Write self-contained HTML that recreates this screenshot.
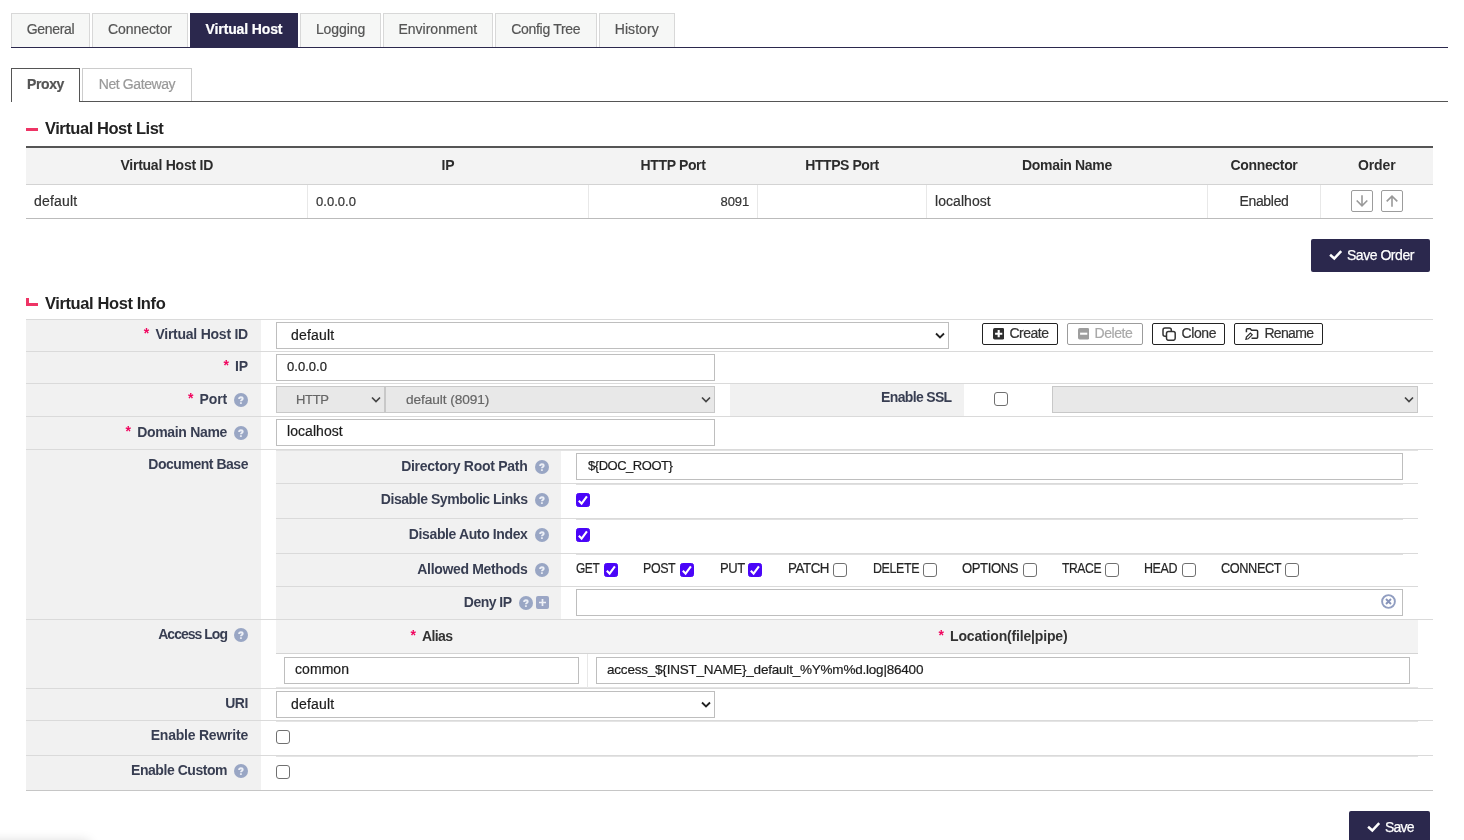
<!DOCTYPE html>
<html><head>
<meta charset="utf-8">
<title>Virtual Host</title>
<style>
*{box-sizing:border-box;margin:0;padding:0}
html,body{width:1464px;height:840px;overflow:hidden;background:#fff}
body{font-family:"Liberation Sans",sans-serif;font-size:14px;color:#333;letter-spacing:-0.3px}
#page{position:relative;width:1464px;height:840px;overflow:hidden;background:transparent;will-change:transform}
.abs{position:absolute}
/* main tabs */
.tab{position:absolute;top:13px;height:34px;line-height:30px;text-align:center;background:#f6f7f6;border:1px solid #d8d8d8;border-bottom:none;color:#555;font-size:14px;white-space:nowrap}
.tab.on{background:#2b284d;border-color:#2b284d;color:#fff;font-weight:bold;letter-spacing:-0.2px}
.line1{position:absolute;left:11px;top:47px;width:1437px;height:1px;background:#2b284d}
/* sub tabs */
.stab{position:absolute;top:68px;height:33px;line-height:31px;text-align:center;background:#fff;border:1px solid #ccc;border-bottom:none;color:#999;white-space:nowrap}
.stab.on{height:34px;border-color:#555;color:#555;font-weight:bold;letter-spacing:-0.5px}
.line2{position:absolute;left:80px;top:101px;width:1368px;height:1px;background:#555}
/* titles */
.ttl{position:absolute;left:45px;font-size:16.5px;font-weight:bold;color:#222;letter-spacing:-0.45px;white-space:nowrap;line-height:20px}
/* list table */
.th{position:absolute;top:148px;height:36px;line-height:35px;text-align:center;font-weight:bold;color:#2c2c2c;letter-spacing:-0.35px;white-space:nowrap}
.td{position:absolute;top:185px;height:33px;line-height:33.300px;font-size:13.500px;color:#333;white-space:nowrap}
.vd{position:absolute;top:185px;width:1px;height:33px;background:#e8e8e8}
.obtn{position:absolute;top:190px;width:22px;height:22px;border:1px solid #9c9c9c;border-radius:2px;background:#fff}
/* buttons */
.pbtn{position:absolute;background:#2b284d;color:#fff;-webkit-text-stroke:0.25px #fff;border-radius:2px;white-space:nowrap}
.sbtn{position:absolute;top:323px;height:22px;border:1px solid #222;border-radius:2px;background:#fff;color:#333;white-space:nowrap;line-height:19px;font-size:14px}
.sbtn.dis{border-color:#9c9c9c;color:#a8a8a8}
/* form */
.lab{position:absolute;left:26px;width:235px;background:#f1f1f1}
.hl{position:absolute;height:1px;background:#dadada}
.lt{margin-top:-1px;position:absolute;text-align:right;font-weight:bold;color:#383e52;letter-spacing:-0.4px;white-space:nowrap;line-height:18px}
.req{color:#f0065f;font-weight:bold;margin-right:6.5px;position:relative;top:-0.5px}
.inp{position:absolute;height:27px;border:1px solid #bebebe;background:#fff;line-height:25.300px;font-size:13.500px;color:#1c1c1c;white-space:nowrap;overflow:hidden}
.inp.ti{line-height:23.300px}
.inp,.td,.mt,.tab,.sbtn,.stab{-webkit-text-stroke:0.2px}
.inp.dis{background:#e8e8e8;border-color:#c8c8c8;color:#666}
.help{position:absolute;width:14px;height:14px;border-radius:7px;background:#99a6c4}
.cb{position:absolute;width:14px;height:14px;border:1.2px solid #707070;border-radius:3px;background:#fff}
.cb.on{background:#4a05f8;border-color:#4a05f8;border-radius:2.5px}
.mt{margin-left:-0.7px;position:absolute;top:559px;line-height:18px;color:#262626;white-space:nowrap;letter-spacing:-0.35px}
</style>
</head>
<body>
<div id="page">

<!-- main tabs -->
<div class="tab" style="left:11px;width:79px"><span style="letter-spacing: -0.34px;">General</span></div>
<div class="tab" style="left:92px;width:96px"><span style="letter-spacing: -0.08px;">Connector</span></div>
<div class="tab on" style="left:190px;width:108px"><span style="letter-spacing: -0.13px;">Virtual Host</span></div>
<div class="tab" style="left:300px;width:81px"><span style="letter-spacing: -0.09px;">Logging</span></div>
<div class="tab" style="left:383px;width:109.5px"><span style="letter-spacing: 0.01px;">Environment</span></div>
<div class="tab" style="left:495px;width:101.5px"><span style="letter-spacing: -0.31px;">Config Tree</span></div>
<div class="tab" style="left:599px;width:75.5px"><span style="letter-spacing: 0.08px;">History</span></div>
<div class="line1"></div>

<!-- sub tabs -->
<div class="line2"></div>
<div class="stab on" style="left:11px;width:69px"><span style="letter-spacing: -0.4px;">Proxy</span></div>
<div class="stab" style="left:82px;width:110px"><span style="letter-spacing: -0.41px;">Net Gateway</span></div>

<!-- Virtual Host List -->
<div class="abs" style="left:26px;top:128px;width:12px;height:3px;background:#ee3465"></div>
<div class="ttl" style="top:118px"><span style="letter-spacing: -0.46px;">Virtual Host List</span></div>

<div class="abs" style="left:26px;top:146px;width:1407px;height:2px;background:#555"></div>
<div class="abs" style="left:26px;top:148px;width:1407px;height:36px;background:#f3f3f3"></div>
<div class="abs" style="left:26px;top:184px;width:1407px;height:1px;background:#d3d3d3"></div>
<div class="abs" style="left:26px;top:218px;width:1407px;height:1px;background:#bbb"></div>

<div class="th" style="left:26px;width:281.5px"><span style="letter-spacing: -0.24px;">Virtual Host ID</span></div>
<div class="th" style="left:307.5px;width:281px"><span style="letter-spacing: -0.17px;">IP</span></div>
<div class="th" style="left:588.5px;width:169px"><span style="letter-spacing: -0.36px;">HTTP Port</span></div>
<div class="th" style="left:757.5px;width:169px"><span style="letter-spacing: -0.44px;">HTTPS Port</span></div>
<div class="th" style="left:926.5px;width:281px"><span style="letter-spacing: -0.32px;">Domain Name</span></div>
<div class="th" style="left:1207.5px;width:113px"><span style="letter-spacing: -0.34px;">Connector</span></div>
<div class="th" style="left:1320.5px;width:112.5px"><span style="letter-spacing: -0.15px;">Order</span></div>

<div class="vd" style="left:307px"></div>
<div class="vd" style="left:588px"></div>
<div class="vd" style="left:757px"></div>
<div class="vd" style="left:926px"></div>
<div class="vd" style="left:1207px"></div>
<div class="vd" style="left:1320px"></div>

<div class="td" style="left:34px"><span style="letter-spacing: 0.19px; font-size: 14px;">default</span></div>
<div class="td" style="left:316px"><span style="letter-spacing: 0.02px; font-size: 13px;">0.0.0.0</span></div>
<div class="td" style="left:700px;width:49px;text-align:right"><span style="letter-spacing: -0.11px; font-size: 13px;">8091</span></div>
<div class="td" style="left:935px"><span style="letter-spacing: 0.06px; font-size: 14px;">localhost</span></div>
<div class="td" style="left:1207.5px;width:113px;text-align:center"><span style="letter-spacing: -0.32px; font-size: 14px;">Enabled</span></div>
<div class="obtn" style="left:1351px"><svg width="20" height="20" viewBox="0 0 20 20"><path d="M10 4.200V15M4.700 9.500L10 14.800L15.300 9.500" fill="none" stroke="#999" stroke-width="1.600"></path></svg></div>
<div class="obtn" style="left:1381px"><svg width="20" height="20" viewBox="0 0 20 20"><path d="M10 15.700V5M4.700 10.400L10 5.100L15.300 10.400" fill="none" stroke="#999" stroke-width="1.600"></path></svg></div>

<!-- Save Order -->
<div class="pbtn" style="left:1311px;top:239px;width:119px;height:33px;line-height:33px">
  <svg class="abs" style="left:17px;top:10px" width="15" height="13" viewBox="0 0 15 13"><path d="M2.100 5.700L6.300 9.500L13.200 2.100" fill="none" stroke="#fff" stroke-width="2.500"></path></svg>
  <span class="abs" style="left:36px;top:0"><span style="letter-spacing: -0.47px;">Save Order</span></span>
</div>

<!-- Virtual Host Info -->
<div class="abs" style="left:26px;top:298px;width:3px;height:8px;background:#ee3465"></div>
<div class="abs" style="left:26px;top:303px;width:12px;height:3px;background:#ee3465"></div>
<div class="ttl" style="top:293px"><span style="letter-spacing: -0.4px;">Virtual Host Info</span></div>

<!-- FORM_START -->
<!-- label column bg -->
<div class="lab" style="top:320px;height:470px"></div>
<!-- inner label bgs -->
<div class="abs" style="left:730px;top:384px;width:234px;height:32px;background:#f1f1f1"></div>
<div class="abs" style="left:276px;top:451px;width:285px;height:168px;background:#f1f1f1"></div>
<div class="abs" style="left:276px;top:620px;width:1142px;height:33px;background:#f3f3f3"></div>

<!-- inner soft lines (x 276..1418) -->
<div class="hl" style="left:276px;width:1142px;top:450px;background:#e2e2e2"></div>
<div class="hl" style="left:576px;width:826.500px;top:484px;background:#e0e0e0"></div>
<div class="hl" style="left:576px;width:826.500px;top:519px;background:#e0e0e0"></div>
<div class="hl" style="left:576px;width:826.500px;top:554px;background:#e0e0e0"></div>
<div class="hl" style="left:276px;width:1142px;top:687px;background:#e4e4e4"></div>
<div class="hl" style="left:276px;width:1142px;top:721px;background:#e4e4e4"></div>
<div class="hl" style="left:276px;width:1142px;top:756px;background:#e4e4e4"></div>

<!-- outer row lines -->
<div class="hl" style="left:26px;width:1407px;top:319px"></div>
<div class="hl" style="left:26px;width:1407px;top:351px"></div>
<div class="hl" style="left:26px;width:1407px;top:383px"></div>
<div class="hl" style="left:26px;width:1407px;top:416px"></div>
<div class="hl" style="left:26px;width:1407px;top:449px"></div>
<div class="hl" style="left:26px;width:1407px;top:619px"></div>
<div class="hl" style="left:26px;width:1407px;top:688px"></div>
<div class="hl" style="left:26px;width:1407px;top:720px"></div>
<div class="hl" style="left:26px;width:1407px;top:755px"></div>
<div class="hl" style="left:26px;width:1407px;top:790px;background:#c6c6c6"></div>
<!-- nested row lines -->
<div class="hl" style="left:276px;width:1142px;top:483px"></div>
<div class="hl" style="left:276px;width:1142px;top:518px"></div>
<div class="hl" style="left:276px;width:1142px;top:553px"></div>
<div class="hl" style="left:276px;width:1142px;top:586px"></div>
<div class="hl" style="left:276px;width:1142px;top:653px;background:#d4d4d4"></div>
<div class="abs" style="left:587px;top:654px;width:1px;height:34px;background:#e8e8e8"></div>

<!-- outer labels -->
<div class="lt" style="left:26px;width:222px;top:325.500px"><span class="req">*</span><span style="letter-spacing: -0.24px;">Virtual Host ID</span></div>
<div class="lt" style="left:26px;width:222px;top:357.500px"><span class="req">*</span><span style="letter-spacing: -0.17px;">IP</span></div>
<div class="lt" style="left:26px;width:201px;top:390.500px"><span class="req">*</span><span style="letter-spacing: -0.15px;">Port</span></div>
<div class="help" style="left:234px;top:393px"><svg width="14" height="14" viewBox="0 0 14 14"><path d="M5.100 5.900c0-1.100 0.700-1.700 1.800-1.700s1.800 0.600 1.800 1.500c0 1.300-1.800 1.200-1.800 2.600" fill="none" stroke="#eceff6" stroke-width="1.900"></path><rect x="5.950" y="9.300" width="1.900" height="1.600" fill="#eceff6"></rect></svg></div>
<div class="lt" style="left:26px;width:201px;top:423.500px"><span class="req">*</span><span style="letter-spacing: -0.32px;">Domain Name</span></div>
<div class="help" style="left:234px;top:426px"><svg width="14" height="14" viewBox="0 0 14 14"><path d="M5.100 5.900c0-1.100 0.700-1.700 1.800-1.700s1.800 0.600 1.800 1.500c0 1.300-1.800 1.200-1.800 2.600" fill="none" stroke="#eceff6" stroke-width="1.900"></path><rect x="5.950" y="9.300" width="1.900" height="1.600" fill="#eceff6"></rect></svg></div>
<div class="lt" style="left:26px;width:222px;top:455.500px"><span style="letter-spacing: -0.47px;">Document Base</span></div>
<div class="lt" style="left:26px;width:201px;top:625.500px"><span style="letter-spacing: -0.98px;">Access Log</span></div>
<div class="help" style="left:234px;top:628px"><svg width="14" height="14" viewBox="0 0 14 14"><path d="M5.100 5.900c0-1.100 0.700-1.700 1.800-1.700s1.800 0.600 1.800 1.500c0 1.300-1.800 1.200-1.800 2.600" fill="none" stroke="#eceff6" stroke-width="1.900"></path><rect x="5.950" y="9.300" width="1.900" height="1.600" fill="#eceff6"></rect></svg></div>
<div class="lt" style="left:26px;width:222px;top:694.500px"><span style="letter-spacing: -0.44px;">URI</span></div>
<div class="lt" style="left:26px;width:222px;top:726.500px"><span style="letter-spacing: -0.22px;">Enable Rewrite</span></div>
<div class="lt" style="left:26px;width:201px;top:761.500px"><span style="letter-spacing: -0.46px;">Enable Custom</span></div>
<div class="help" style="left:234px;top:764px"><svg width="14" height="14" viewBox="0 0 14 14"><path d="M5.100 5.900c0-1.100 0.700-1.700 1.800-1.700s1.800 0.600 1.800 1.500c0 1.300-1.800 1.200-1.800 2.600" fill="none" stroke="#eceff6" stroke-width="1.900"></path><rect x="5.950" y="9.300" width="1.900" height="1.600" fill="#eceff6"></rect></svg></div>

<!-- row 1 -->
<div class="inp" style="left:276px;top:322px;width:672.500px;padding-left:14px"><span style="letter-spacing: 0.19px; font-size: 14px;">default</span></div>
<svg class="abs" style="left:935px;top:332px" width="10" height="8" viewBox="0 0 10 8"><path d="M1 1.500l4 4l4-4" fill="none" stroke="#222" stroke-width="1.800"></path></svg>
<div class="sbtn" style="left:982px;width:76px"><svg class="abs" style="left:10px;top:4.300px" width="11.400" height="11.400" viewBox="0 0 12 12"><rect x="0" y="0" width="12" height="12" rx="1.800" fill="#2e2e2e"></rect><path d="M6 2.200v7.600M2.200 6h7.600" stroke="#fff" stroke-width="2.200"></path></svg><span class="abs" style="left:26.500px;top:0"><span style="letter-spacing: -0.52px;">Create</span></span></div>
<div class="sbtn dis" style="left:1067px;width:76px"><svg class="abs" style="left:10px;top:4.300px" width="11.400" height="11.400" viewBox="0 0 12 12"><rect x="0" y="0" width="12" height="12" rx="1.800" fill="#9e9e9e"></rect><path d="M2.200 6h7.600" stroke="#fff" stroke-width="2.200"></path></svg><span class="abs" style="left:26.500px;top:0"><span style="letter-spacing: -0.46px;">Delete</span></span></div>
<div class="sbtn" style="left:1152px;width:73px"><svg class="abs" style="left:9.300px;top:3px" width="14" height="14" viewBox="0 0 14 14"><rect x="1" y="1" width="8.300" height="8.300" rx="2" fill="none" stroke="#333" stroke-width="1.500"></rect><rect x="4.500" y="4.600" width="8.700" height="8.700" rx="2" fill="#fff" stroke="#333" stroke-width="1.500"></rect></svg><span class="abs" style="left:28.500px;top:0"><span style="letter-spacing: -0.39px;">Clone</span></span></div>
<div class="sbtn" style="left:1234px;width:89px"><svg class="abs" style="left:10.300px;top:4.300px" width="14" height="12" viewBox="0 0 14 12"><path d="M1.400 4.300V1.800c0-0.600 0.400-1 1-1h2.800l1.400 1.500h5c0.600 0 1 0.400 1 1v6c0 0.600-0.400 1-1 1H6.500" fill="none" stroke="#2e2e2e" stroke-width="1.500"></path><path d="M0.900 11.300l0.500-2.300l4-4l1.800 1.800l-4 4z" fill="#fff" stroke="#2e2e2e" stroke-width="1.200"></path></svg><span class="abs" style="left:29.400px;top:0"><span style="letter-spacing: -0.67px;">Rename</span></span></div>

<!-- row 2 -->
<div class="inp ti" style="left:276px;top:354px;width:439px;padding-left:10px"><span style="letter-spacing: 0.02px; font-size: 13px;">0.0.0.0</span></div>

<!-- row 3 -->
<div class="inp dis" style="left:276px;top:386px;width:108.500px;padding-left:19px"><span style="letter-spacing: -0.33px; font-size: 13px;">HTTP</span></div>
<svg class="abs" style="left:371px;top:396px" width="10" height="8" viewBox="0 0 10 8"><path d="M1 1.500l4 4l4-4" fill="none" stroke="#444" stroke-width="1.700"></path></svg>
<div class="inp dis" style="left:385px;top:386px;width:330px;padding-left:20px"><span style="letter-spacing: -0.08px; font-size: 13.7px;">default (8091)</span></div>
<svg class="abs" style="left:701px;top:396px" width="10" height="8" viewBox="0 0 10 8"><path d="M1 1.500l4 4l4-4" fill="none" stroke="#444" stroke-width="1.700"></path></svg>
<div class="lt" style="left:730px;width:221.500px;top:389px"><span style="letter-spacing: -0.66px;">Enable SSL</span></div>
<div class="cb" style="left:994px;top:392px"></div>
<div class="inp dis" style="left:1052px;top:386px;width:366px"></div>
<svg class="abs" style="left:1404px;top:396px" width="10" height="8" viewBox="0 0 10 8"><path d="M1 1.500l4 4l4-4" fill="none" stroke="#444" stroke-width="1.700"></path></svg>

<!-- row 4 -->
<div class="inp ti" style="left:276px;top:419px;width:439px;padding-left:10px"><span style="letter-spacing: 0.06px; font-size: 14px;">localhost</span></div>

<!-- Document base nested -->
<div class="lt" style="left:276px;width:251.500px;top:457.500px"><span style="letter-spacing: -0.27px;">Directory Root Path</span></div>
<div class="help" style="left:535px;top:460px"><svg width="14" height="14" viewBox="0 0 14 14"><path d="M5.100 5.900c0-1.100 0.700-1.700 1.800-1.700s1.800 0.600 1.800 1.500c0 1.300-1.800 1.200-1.800 2.600" fill="none" stroke="#eceff6" stroke-width="1.900"></path><rect x="5.950" y="9.300" width="1.900" height="1.600" fill="#eceff6"></rect></svg></div>
<div class="inp ti" style="left:576px;top:453px;width:826.500px;padding-left:11px"><span style="letter-spacing: -0.47px; font-size: 13px;">${DOC_ROOT}</span></div>

<div class="lt" style="left:276px;width:251.500px;top:490.500px"><span style="letter-spacing: -0.44px;">Disable Symbolic Links</span></div>
<div class="help" style="left:535px;top:493px"><svg width="14" height="14" viewBox="0 0 14 14"><path d="M5.100 5.900c0-1.100 0.700-1.700 1.800-1.700s1.800 0.600 1.800 1.500c0 1.300-1.800 1.200-1.800 2.600" fill="none" stroke="#eceff6" stroke-width="1.900"></path><rect x="5.950" y="9.300" width="1.900" height="1.600" fill="#eceff6"></rect></svg></div>
<div class="cb on" style="left:576px;top:493px"><svg class="abs" style="left:-1px;top:-1px" width="14" height="14" viewBox="0 0 14 14"><path d="M2.800 7.800L5.600 10.600L10.900 3.400" fill="none" stroke="#fff" stroke-width="2.100"></path></svg></div>

<div class="lt" style="left:276px;width:251.500px;top:525.500px"><span style="letter-spacing: -0.38px;">Disable Auto Index</span></div>
<div class="help" style="left:535px;top:528px"><svg width="14" height="14" viewBox="0 0 14 14"><path d="M5.100 5.900c0-1.100 0.700-1.700 1.800-1.700s1.800 0.600 1.800 1.500c0 1.300-1.800 1.200-1.800 2.600" fill="none" stroke="#eceff6" stroke-width="1.900"></path><rect x="5.950" y="9.300" width="1.900" height="1.600" fill="#eceff6"></rect></svg></div>
<div class="cb on" style="left:576px;top:528px"><svg class="abs" style="left:-1px;top:-1px" width="14" height="14" viewBox="0 0 14 14"><path d="M2.800 7.800L5.600 10.600L10.900 3.400" fill="none" stroke="#fff" stroke-width="2.100"></path></svg></div>

<div class="lt" style="left:276px;width:251.500px;top:560.500px"><span style="letter-spacing: -0.33px;">Allowed Methods</span></div>
<div class="help" style="left:535px;top:562.500px"><svg width="14" height="14" viewBox="0 0 14 14"><path d="M5.100 5.900c0-1.100 0.700-1.700 1.800-1.700s1.800 0.600 1.800 1.500c0 1.300-1.800 1.200-1.800 2.600" fill="none" stroke="#eceff6" stroke-width="1.900"></path><rect x="5.950" y="9.300" width="1.900" height="1.600" fill="#eceff6"></rect></svg></div>
<div class="mt" style="left:576.500px"><span style="letter-spacing: -0.45px; display: inline-block; transform-origin: 0px 50%; transform: scaleX(0.849);">GET</span></div><div class="cb on" style="left:604px;top:563px"><svg class="abs" style="left:-1px;top:-1px" width="14" height="14" viewBox="0 0 14 14"><path d="M2.800 7.800L5.600 10.600L10.900 3.400" fill="none" stroke="#fff" stroke-width="2.100"></path></svg></div>
<div class="mt" style="left:644px"><span style="letter-spacing: -0.45px; display: inline-block; transform-origin: 0px 50%; transform: scaleX(0.889);">POST</span></div><div class="cb on" style="left:680px;top:563px"><svg class="abs" style="left:-1px;top:-1px" width="14" height="14" viewBox="0 0 14 14"><path d="M2.800 7.800L5.600 10.600L10.900 3.400" fill="none" stroke="#fff" stroke-width="2.100"></path></svg></div>
<div class="mt" style="left:720.500px"><span style="letter-spacing: -0.45px; display: inline-block; transform-origin: 0px 50%; transform: scaleX(0.931);">PUT</span></div><div class="cb on" style="left:748px;top:563px"><svg class="abs" style="left:-1px;top:-1px" width="14" height="14" viewBox="0 0 14 14"><path d="M2.800 7.800L5.600 10.600L10.900 3.400" fill="none" stroke="#fff" stroke-width="2.100"></path></svg></div>
<div class="mt" style="left:788.500px"><span style="letter-spacing: -0.45px; display: inline-block; transform-origin: 0px 50%; transform: scaleX(0.952);">PATCH</span></div><div class="cb" style="left:833px;top:563px"></div>
<div class="mt" style="left:873.500px"><span style="letter-spacing: -0.45px; display: inline-block; transform-origin: 0px 50%; transform: scaleX(0.89);">DELETE</span></div><div class="cb" style="left:923px;top:563px"></div>
<div class="mt" style="left:963px"><span style="letter-spacing: -0.45px; display: inline-block; transform-origin: 0px 50%; transform: scaleX(0.936);">OPTIONS</span></div><div class="cb" style="left:1022.500px;top:563px"></div>
<div class="mt" style="left:1062.500px"><span style="letter-spacing: -0.45px; display: inline-block; transform-origin: 0px 50%; transform: scaleX(0.865);">TRACE</span></div><div class="cb" style="left:1105px;top:563px"></div>
<div class="mt" style="left:1145px"><span style="letter-spacing: -0.45px; display: inline-block; transform-origin: 0px 50%; transform: scaleX(0.892);">HEAD</span></div><div class="cb" style="left:1182px;top:563px"></div>
<div class="mt" style="left:1222px"><span style="letter-spacing: -0.45px; display: inline-block; transform-origin: 0px 50%; transform: scaleX(0.911);">CONNECT</span></div><div class="cb" style="left:1285px;top:563px"></div>

<div class="lt" style="left:276px;width:235.500px;top:593.500px"><span style="letter-spacing: -0.53px;">Deny IP</span></div>
<div class="help" style="left:519px;top:596px"><svg width="14" height="14" viewBox="0 0 14 14"><path d="M5.100 5.900c0-1.100 0.700-1.700 1.800-1.700s1.800 0.600 1.800 1.500c0 1.300-1.800 1.200-1.800 2.600" fill="none" stroke="#eceff6" stroke-width="1.900"></path><rect x="5.950" y="9.300" width="1.900" height="1.600" fill="#eceff6"></rect></svg></div>
<div class="abs" style="left:535.800px;top:596px;width:13px;height:13px;border-radius:2px;background:#9ba6c5"><svg width="13" height="13" viewBox="0 0 13 13"><path d="M6.500 3v7M3 6.500h7" stroke="#eef0f6" stroke-width="1.700"></path></svg></div>
<div class="inp" style="left:576px;top:589px;width:826.500px"></div>
<svg class="abs" style="left:1381px;top:594px" width="15" height="15" viewBox="0 0 15 15"><circle cx="7.500" cy="7.500" r="6.400" fill="none" stroke="#919ec1" stroke-width="1.900"></circle><path d="M5 5l5 5M10 5l-5 5" stroke="#8794ba" stroke-width="1.900"></path></svg>

<!-- Access log -->
<div class="lt" style="left:276px;width:311px;top:627.500px;text-align:center;color:#333"><span class="req">*</span><span style="letter-spacing: -0.61px;">Alias</span></div>
<div class="lt" style="left:588px;width:830px;top:627.500px;text-align:center;color:#333"><span class="req">*</span><span style="letter-spacing: -0.17px;">Location(file|pipe)</span></div>
<div class="inp ti" style="left:284px;top:657px;width:294.500px;padding-left:10px"><span style="letter-spacing: 0.06px; font-size: 14px;">common</span></div>
<div class="inp ti" style="left:596px;top:657px;width:814px;padding-left:10px"><span style="letter-spacing: -0.21px;">access_${INST_NAME}_default_%Y%m%d.log|86400</span></div>

<!-- URI -->
<div class="inp" style="left:276px;top:691px;width:439px;padding-left:14px"><span style="letter-spacing: 0.19px; font-size: 14px;">default</span></div>
<svg class="abs" style="left:701px;top:701px" width="10" height="8" viewBox="0 0 10 8"><path d="M1 1.500l4 4l4-4" fill="none" stroke="#222" stroke-width="1.800"></path></svg>

<!-- Rewrite / Custom -->
<div class="cb" style="left:276px;top:730px"></div>
<div class="cb" style="left:276px;top:765px"></div>
<!-- FORM_END -->

<!-- Save -->
<div class="pbtn" style="left:1349px;top:811px;width:81px;height:33px;line-height:33px">
  <svg class="abs" style="left:17px;top:10px" width="15" height="13" viewBox="0 0 15 13"><path d="M2.100 5.700L6.300 9.500L13.200 2.100" fill="none" stroke="#fff" stroke-width="2.500"></path></svg>
  <span class="abs" style="left:36px;top:0"><span style="letter-spacing: -0.76px;">Save</span></span>
</div>

<!-- faint shadow bottom-left -->
<div class="abs" style="left:-20px;top:841px;width:110px;height:20px;border-radius:6px;background:#ddd;box-shadow:0 0 11px 1px rgba(0,0,0,0.13)"></div>

</div>


</body></html>
